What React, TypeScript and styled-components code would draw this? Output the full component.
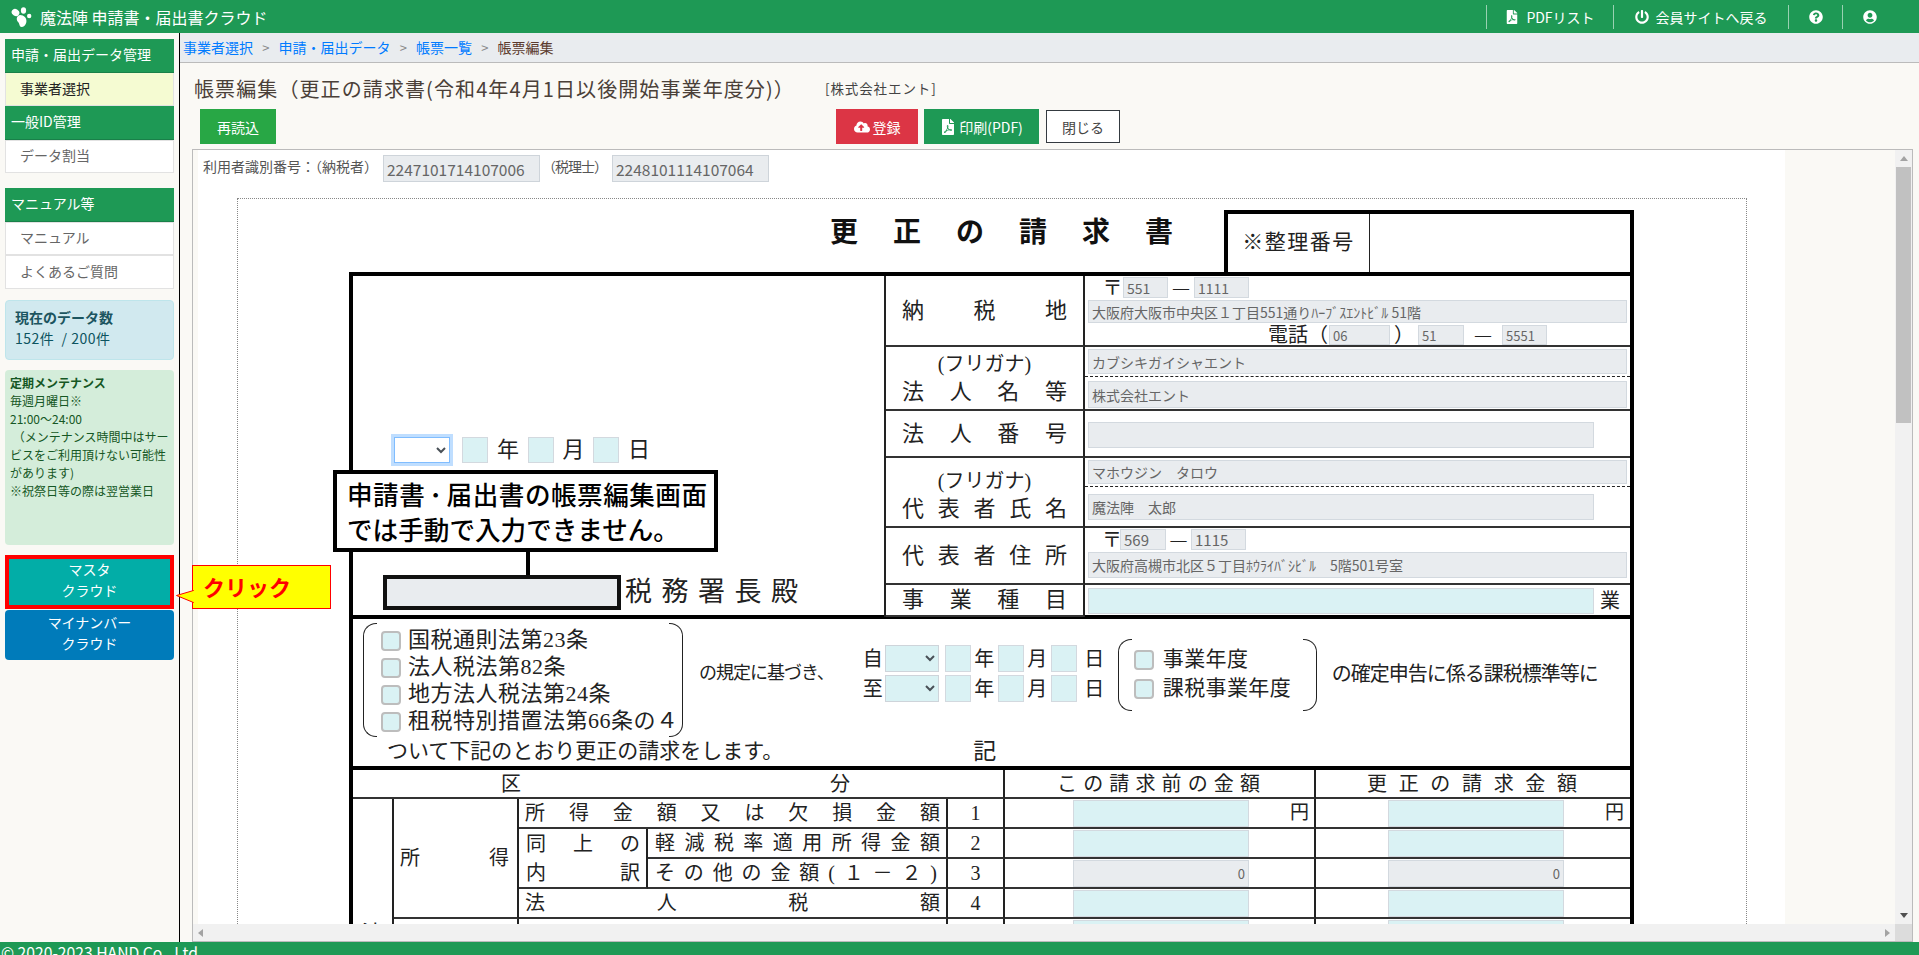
import React from "react";
import styled, { createGlobalStyle } from "styled-components";
import { FaFilePdf, FaPowerOff, FaQuestionCircle, FaUserCircle, FaCloudUploadAlt } from "react-icons/fa";

const UI = `"Noto Sans CJK JP", "Noto Sans", sans-serif`;
const MINCHO = `"Liberation Serif", "Noto Sans CJK JP", serif`;
const GREEN = "#1e9955";

const Global = createGlobalStyle`
  html, body { margin: 0; padding: 0; height: 100%; overflow: hidden; }
  * { box-sizing: border-box; }
  body { font-family: ${UI}; color: #444; background: #faf9f5; }
  #root { height: 100%; }
`;

const Page = styled.div`
  position: relative; height: 100vh; display: flex; flex-direction: column; overflow: hidden;
`;
const Header = styled.header`
  height: 33px; flex: none; background: ${GREEN}; color: #fff; display: flex; align-items: center;
`;
const Brand = styled.div`
  display: flex; align-items: center; gap: 8px; padding-left: 11px; font-size: 16px; white-space: pre;
  svg { width: 21px; height: 20px; }
`;
const Nav = styled.nav`
  margin-left: auto; display: flex; align-items: center;
`;
const NavItem = styled.div<{ $w: number; $plain?: boolean }>`
  width: ${p => p.$w}px; height: 24px; border-left: ${p => (p.$plain ? "none" : "1px solid rgba(255,255,255,.55)")};
  display: flex; align-items: center; justify-content: center; gap: 7px; font-size: 14px; white-space: nowrap;
  svg { width: 14px; height: 14px; flex: none; }
`;
const Body = styled.div`
  flex: 1; min-height: 0; display: flex;
`;
const Sidebar = styled.aside`
  width: 180px; flex: none; border-right: 1px solid #000; padding: 6px 5px 0; background: #faf9f5;
`;
const MenuGroup = styled.div<{ $mt?: number }>`
  margin-top: ${p => p.$mt ?? 0}px;
`;
const MenuHead = styled.div`
  height: 33.5px; background: ${GREEN}; color: #fff; font-size: 14px; display: flex; align-items: center; padding: 0 0 2px 6px;
  border-bottom: 1px solid #198049;
`;
const MenuItem = styled.div<{ $active?: boolean }>`
  height: 33.5px; font-size: 14px; display: flex; align-items: center; padding: 0 0 2px 14px;
  background: ${p => (p.$active ? "#f5fbd2" : "#fff")}; color: ${p => (p.$active ? "#222" : "#666")};
  border: 1px solid #e2e2e2; border-top: ${p => (p.$active ? "none" : "1px solid #e2e2e2")};
`;
const CountBox = styled.div`
  margin-top: 11px; height: 60px; background: #d1e9ef; border: 1px solid #bee5eb; border-radius: 4px; color: #0c5460;
  padding: 6px 9px; font-size: 14px; line-height: 21px; letter-spacing: .5px; white-space: pre;
  b { display: block; font-weight: 700; color: #1c5560; letter-spacing: 0; }
`;
const NoticeBox = styled.div`
  margin-top: 10px; height: 175px; background: #d4edda; border-radius: 4px; color: #155724;
  padding: 4px 5px; font-size: 12px; line-height: 18px; white-space: nowrap;
  b { font-weight: 700; }
`;
const SideButton = styled.div<{ $bg: string; $marked?: boolean; $mt: number; $h: number }>`
  margin-top: ${p => p.$mt}px; height: ${p => p.$h}px; background: ${p => p.$bg}; color: #fff;
  border-radius: ${p => (p.$marked ? 0 : 4)}px; border: ${p => (p.$marked ? "4px solid #f00" : "none")};
  font-size: 14px; line-height: 21px; text-align: center; display: flex; align-items: center; justify-content: center;
  padding-bottom: 3px;
`;
const ClickNote = styled.div`
  position: absolute; left: 192px; top: 565px; width: 139px; height: 44px; background: #ff0; border: 1px solid #f00;
  color: #f00; font-size: 22px; font-weight: 700; padding-left: 10px; line-height: 40px;
  svg { position: absolute; left: -17px; top: 24px; }
`;
const Main = styled.main`
  flex: 1; min-width: 0; display: flex; flex-direction: column;
`;
const Breadcrumb = styled.div`
  height: 30px; flex: none; background: #e9ecef; border-bottom: 1px solid #bbb; display: flex; align-items: center;
  padding: 0 0 1px 3px; font-size: 14px; white-space: nowrap;
`;
const Crumb = styled.span<{ $current?: boolean }>`
  color: ${p => (p.$current ? "#5b3a2c" : "#007bff")};
`;
const CrumbSep = styled.span`
  width: 25.5px; text-align: center; color: #888; font-size: 13px;
`;
const TitleRow = styled.div`
  height: 46px; flex: none; display: flex; align-items: center; padding: 4px 0 0 14px; white-space: nowrap;
`;
const PageTitle = styled.h1`
  margin: 0; font-size: 20px; font-weight: 400; color: #4a4038; letter-spacing: 1.1px;
`;
const Company = styled.span`
  margin-left: 30px; font-size: 13.5px; color: #444; letter-spacing: .9px;
`;
const ToolRow = styled.div`
  height: 35px; flex: none; display: flex; padding-left: 20px;
`;
const Btn = styled.button<{ $bg: string; $w: number; $ml?: number }>`
  width: ${p => p.$w}px; margin-left: ${p => p.$ml ?? 6}px; height: 35px; border: none; background: ${p => p.$bg}; color: #fff;
  font: 14px ${UI}; display: flex; align-items: center; justify-content: center; gap: 3px; padding: 0;
  svg { width: 16px; height: 16px; }
`;
const CloseBtn = styled.button`
  width: 74px; height: 33px; margin: 1px 0 0 7px; background: #fff; border: 1px solid #343a40; color: #444;
  font: 14px ${UI}; padding: 0;
`;
const Frame = styled.div`
  flex: 1; min-height: 0; margin: 5px 6px 0 12px; border: 1px solid #bbb;
  display: grid; grid-template-columns: 1fr 17px; grid-template-rows: 1fr 17px;
`;
const Viewport = styled.div`
  overflow: hidden; padding-left: 5px; background: #faf9f5; min-width: 0; min-height: 0;
`;
const Doc = styled.div`
  width: 1587px; background: #fff; height: 100%;
`;
const IdRow = styled.div`
  height: 48px; display: flex; align-items: flex-start; padding: 5px 0 0 5px; font-size: 14px; color: #555; white-space: nowrap;
`;
const IdLabel = styled.span<{ $ls: number }>`
  line-height: 22px; letter-spacing: ${p => p.$ls}px;
`;
const IdField = styled.input`
  width: 157px; height: 27px; margin: 0 2px 0 5px; background: #e9ecef; border: 1px solid #ced4da; color: #666;
  font: 15.5px ${UI}; padding: 0 3px;
`;
const VTrack = styled.div`
  background: #f1f1f1; display: flex; flex-direction: column; justify-content: space-between; position: relative;
`;
const Thumb = styled.div`
  position: absolute; top: 17px; left: 1px; right: 1px; height: 256px; background: #c1c1c1;
`;
const ArrowCell = styled.div`
  height: 17px; display: flex; align-items: center; justify-content: center;
`;
const Arrow = styled.i<{ $dir: "up" | "down" | "left" | "right"; $color: string }>`
  width: 0; height: 0; border: 4px solid transparent; display: block;
  ${p => p.$dir === "up" && `border-top: none; border-bottom: 5px solid ${p.$color};`}
  ${p => p.$dir === "down" && `border-bottom: none; border-top: 5px solid ${p.$color};`}
  ${p => p.$dir === "left" && `border-left: none; border-right: 5px solid ${p.$color};`}
  ${p => p.$dir === "right" && `border-right: none; border-left: 5px solid ${p.$color};`}
`;
const HTrack = styled.div`
  background: #f1f1f1; display: flex; justify-content: space-between; align-items: center; padding: 0 5px;
`;
const Corner = styled.div`
  background: #dcdcdc;
`;
const Footer = styled.footer`
  height: 13px; flex: none; background: ${GREEN}; color: #fff; font: 15.7px/1 ${UI}; padding: 3px 0 0 1px; overflow: hidden; white-space: nowrap;
`;

/* ---- the paper form ---- */
const Sheet = styled.div`
  margin-left: 39px; width: 1510px; border: 1px dotted #888; border-bottom: none; padding: 11px 0 0 111px;
  font-family: ${MINCHO}; color: #222; font-size: 22px; line-height: 1.2;
`;
const TopBand = styled.div`
  height: 62px; width: 1285px; display: flex; justify-content: space-between;
`;
const FormTitle = styled.div`
  margin: 6px 0 0 481px; font-size: 28px; letter-spacing: 35px; font-weight: 700; white-space: nowrap; line-height: 34px; color: #111;
`;
const RefBox = styled.div`
  width: 410px; height: 62px; border: 4px solid #000; border-bottom: none; display: flex; align-items: center; flex: none;
  > div { width: 142px; height: 100%; border-right: 1px solid #222; font-size: 21px; display: flex; align-items: center; justify-content: center; letter-spacing: 1.5px; white-space: nowrap; }
`;
const Outer = styled.div`
  width: 1285px; border: 4px solid #000; border-bottom: none;
`;
const Sec1 = styled.div`
  height: 343px; display: grid; grid-template-columns: 533px 199px 1fr; grid-template-rows: 71px 64px 47px 70px 57px 1fr;
  border-bottom: 4px solid #000;
`;
const LeftCell = styled.div`
  grid-row: 1 / -1; position: relative; border-right: 2px solid #222; padding-top: 161px;
`;
const DateLine = styled.div`
  display: flex; align-items: center; height: 26px; padding-left: 41px;
`;
const Sel = styled.select<{ $w: number; $h: number; $focus?: boolean; $teal?: boolean }>`
  width: ${p => p.$w}px; height: ${p => p.$h}px; flex: none; font: 14px ${UI}; color: #495057;
  background: ${p => (p.$teal ? "#daf2f4" : "#fff")};
  border: 1px solid ${p => (p.$focus ? "#80bdff" : "#ced4da")};
  box-shadow: ${p => (p.$focus ? "0 0 0 3px rgba(0,123,255,.25)" : "none")};
  border-radius: 0; outline: none; padding: 0;
`;
const Field = styled.input<{ $w?: number; $h?: number; $teal?: boolean; $right?: boolean; $fs?: number; $ml?: number; $mt?: number }>`
  display: block; flex: none; width: ${p => (p.$w ? `${p.$w}px` : "100%")}; height: ${p => p.$h ?? 26}px;
  margin: ${p => p.$mt ?? 0}px 0 0 ${p => p.$ml ?? 0}px;
  background: ${p => (p.$teal ? "#daf2f4" : "#e9ecef")}; border: 1px solid #d3d9df; color: #666;
  font: ${p => p.$fs ?? 13}px ${UI}; padding: 0 3px; text-align: ${p => (p.$right ? "right" : "left")}; border-radius: 0; outline: none;
`;
const Unit = styled.span<{ $w: number; $fs?: number; $left?: boolean }>`
  width: ${p => p.$w}px; flex: none; text-align: ${p => (p.$left ? "left" : "center")}; font-size: ${p => p.$fs ?? 22}px; white-space: nowrap;
`;
const OfficeLine = styled.div`
  display: flex; align-items: center; height: 35px; margin-top: 112px; padding-left: 30px;
`;
const OfficeField = styled.div`
  width: 238px; height: 35px; background: #e9ecef; border: 4px solid #111;
`;
const OfficeText = styled.span`
  margin-left: 4px; font-size: 27px; letter-spacing: 9.5px; white-space: nowrap;
`;
const Callout = styled.div`
  position: absolute; left: -20px; top: 194px; width: 385px; height: 82px; background: #fff; border: 4px solid #000;
  font: 500 25.6px/35px ${UI}; color: #000; padding: 2px 0 0 10px; white-space: nowrap;
  &::after { content: ""; position: absolute; left: 189px; top: 100%; width: 4px; height: 23px; margin-top: 4px; background: #000; }
`;
const CalloutWide = styled.span`
  letter-spacing: .5px;
  b { font-weight: 500; margin: 0 4px; }
`;
const Label = styled.div<{ $double?: boolean }>`
  border-right: 2px solid #222; border-bottom: 2px solid #333; padding: 0 16px; display: flex; flex-direction: column;
  justify-content: ${p => (p.$double ? "flex-end" : "center")}; padding-bottom: ${p => (p.$double ? 2 : 0)}px;
`;
const LabelText = styled.div`
  text-align: justify; text-align-last: justify; font-size: 22px; line-height: 30px; white-space: nowrap;
`;
const Kana = styled.div`
  text-align: center; font-size: 20px; line-height: 26px;
`;
const Value = styled.div<{ $pt?: number; $last?: boolean }>`
  border-bottom: ${p => (p.$last ? "none" : "2px solid #333")}; padding: ${p => p.$pt ?? 0}px 3px 0; min-width: 0;
  display: flex; flex-direction: column;
`;
const InlineRow = styled.div<{ $ml?: number; $mt?: number; $h: number }>`
  display: flex; align-items: center; height: ${p => p.$h}px; margin-left: ${p => p.$ml ?? 0}px; margin-top: ${p => p.$mt ?? 0}px;
`;
const DashRule = styled.div<{ $mt: number }>`
  margin: ${p => p.$mt}px -3px 0; border-top: 1px dashed #222; height: 0;
`;
const Sec2 = styled.div`
  height: 147px;
`;
const Sec2Top = styled.div`
  height: 118px; display: flex; padding: 4px 0 0 10px;
`;
const Bracket = styled.div<{ $w: number; $h: number; $mt?: number; $ml?: number; $pt: number; $pl: number }>`
  position: relative; flex: none; width: ${p => p.$w}px; height: ${p => p.$h}px; margin-top: ${p => p.$mt ?? 0}px; margin-left: ${p => p.$ml ?? 0}px;
  padding: ${p => p.$pt}px 0 0 ${p => p.$pl}px;
  &::before, &::after {
    content: ""; position: absolute; top: 0; bottom: 0; width: 13px; border: 1.5px solid #222;
  }
  &::before { left: 0; border-right: none; border-radius: 13px 0 0 13px; }
  &::after { right: 0; border-left: none; border-radius: 0 13px 13px 0; }
`;
const CheckRow = styled.label<{ $h: number; $fs: number; $gap: number; $ls?: number }>`
  display: flex; align-items: center; height: ${p => p.$h}px; font-size: ${p => p.$fs}px; gap: ${p => p.$gap}px; white-space: nowrap;
  letter-spacing: ${p => p.$ls ?? 0}px;
`;
const Check = styled.input.attrs({ type: "checkbox" })`
  appearance: none; margin: 0; width: 20px; height: 20px; flex: none; background: #daf2f4; border: 2px solid #bdbdbd; border-radius: 4px;
`;
const Squeezed = styled.div<{ $ml: number; $mt: number; $fs: number; $ls: number }>`
  margin: ${p => p.$mt}px 0 0 ${p => p.$ml}px; font-size: ${p => p.$fs}px; letter-spacing: ${p => p.$ls}px; white-space: nowrap; flex: none; line-height: 24px;
`;
const PeriodBlock = styled.div`
  margin: 22px 0 0 27px; flex: none; display: flex; flex-direction: column; gap: 3px;
`;
const PeriodRow = styled.div`
  display: flex; align-items: center; height: 27px;
`;
const Sec2Bottom = styled.div`
  height: 29px; display: flex; align-items: center; padding-left: 34px; font-size: 21px; white-space: nowrap;
  i { font-style: normal; margin-left: 190px; font-size: 23px; }
`;
const Grid = styled.div`
  border-top: 4px solid #000; display: grid; grid-template-columns: 41px 125px 129px 300px 57px 311px 1fr;
  grid-template-rows: 29px repeat(5, 30px);
`;
const Cell = styled.div<{ $c: string; $r: string; $pl?: number; $pr?: number; $nr?: boolean; $center?: boolean }>`
  grid-column: ${p => p.$c}; grid-row: ${p => p.$r};
  border-right: ${p => (p.$nr ? "none" : "2px solid #222")}; border-bottom: 2px solid #333;
  padding: 0 ${p => p.$pr ?? 0}px 0 ${p => p.$pl ?? 0}px; font-size: 20px; min-width: 0; white-space: nowrap;
  display: flex; flex-direction: column; justify-content: center; text-align: ${p => (p.$center ? "center" : "justify")};
  text-align-last: ${p => (p.$center ? "center" : "justify")}; line-height: 28px;
`;
const StackCell = styled(Cell)`
  justify-content: space-around;
`;
const TallCell = styled(Cell)`
  justify-content: flex-start; padding-top: 121px; overflow: hidden; font-size: 22px;
`;
const AmountCell = styled.div<{ $c: number; $r: number; $pl: number; $nr?: boolean }>`
  grid-column: ${p => p.$c}; grid-row: ${p => p.$r}; border-right: ${p => (p.$nr ? "none" : "2px solid #222")}; border-bottom: 2px solid #333;
  display: flex; align-items: center; padding-left: ${p => p.$pl}px; font-size: 19px;
  span { margin-left: 41px; }
`;

const rows = [2, 3, 4, 5, 6];

const Paw = () => (
  <svg viewBox="0 0 21 20" fill="#fff" aria-hidden="true">
    <ellipse cx="4.5" cy="5.5" rx="4" ry="3.4" transform="rotate(35 4.5 5.5)" />
    <ellipse cx="12.5" cy="3.5" rx="2.6" ry="3.2" />
    <circle cx="18.2" cy="9" r="2.2" />
    <path d="M9 8C13 8 16 11 15.4 15C15 18 12.5 20 10.5 20C8.5 20 8.5 17 7.5 15.5C5 13 5 9 9 8Z" />
  </svg>
);

export default function App() {
  return (
    <Page>
      <Global />
      <Header>
        <Brand><Paw />魔法陣 申請書・届出書クラウド</Brand>
        <Nav>
          <NavItem $w={127}><FaFilePdf />PDFリスト</NavItem>
          <NavItem $w={175}><FaPowerOff />会員サイトへ戻る</NavItem>
          <NavItem $w={54}><FaQuestionCircle /></NavItem>
          <NavItem $w={54}><FaUserCircle /></NavItem>
          <NavItem $w={23} $plain />
        </Nav>
      </Header>
      <Body>
        <Sidebar>
          <MenuGroup>
            <MenuHead>申請・届出データ管理</MenuHead>
            <MenuItem $active>事業者選択</MenuItem>
            <MenuHead>一般ID管理</MenuHead>
            <MenuItem>データ割当</MenuItem>
          </MenuGroup>
          <MenuGroup $mt={15}>
            <MenuHead>マニュアル等</MenuHead>
            <MenuItem>マニュアル</MenuItem>
            <MenuItem>よくあるご質問</MenuItem>
          </MenuGroup>
          <CountBox><b>現在のデータ数</b>{"152件  / 200件"}</CountBox>
          <NoticeBox>
            <b>定期メンテナンス</b><br />
            毎週月曜日※<br />
            21:00～24:00<br />
            &nbsp;（メンテナンス時間中はサー<br />
            ビスをご利用頂けない可能性<br />
            があります)<br />
            ※祝祭日等の際は翌営業日
          </NoticeBox>
          <SideButton $bg="#02ada7" $marked $mt={10} $h={54}>マスタ<br />クラウド</SideButton>
          <SideButton $bg="#007bba" $mt={1} $h={50}>マイナンバー<br />クラウド</SideButton>
        </Sidebar>
        <Main>
          <Breadcrumb>
            <Crumb>事業者選択</Crumb><CrumbSep>&gt;</CrumbSep>
            <Crumb>申請・届出データ</Crumb><CrumbSep>&gt;</CrumbSep>
            <Crumb>帳票一覧</Crumb><CrumbSep>&gt;</CrumbSep>
            <Crumb $current>帳票編集</Crumb>
          </Breadcrumb>
          <TitleRow>
            <PageTitle>帳票編集（更正の請求書(令和4年4月1日以後開始事業年度分)）</PageTitle>
            <Company>[株式会社エント]</Company>
          </TitleRow>
          <ToolRow>
            <Btn $bg="#28a745" $w={76} $ml={0}>再読込</Btn>
            <Btn $bg="#dc3545" $w={82} $ml={560}><FaCloudUploadAlt />登録</Btn>
            <Btn $bg={GREEN} $w={115}><FaFilePdf />印刷(PDF)</Btn>
            <CloseBtn>閉じる</CloseBtn>
          </ToolRow>
          <Frame>
            <Viewport>
              <Doc>
                <IdRow>
                  <IdLabel $ls={0}>利用者識別番号：（納税者）</IdLabel>
                  <IdField readOnly value="2247101714107006" />
                  <IdLabel $ls={-1}>（税理士）</IdLabel>
                  <IdField readOnly value="2248101114107064" />
                </IdRow>
                <Sheet>
                  <TopBand>
                    <FormTitle>更正の請求書</FormTitle>
                    <RefBox><div>※整理番号</div></RefBox>
                  </TopBand>
                  <Outer>
                    <Sec1>
                      <LeftCell>
                        <DateLine>
                          <Sel $w={56} $h={26} $focus />
                          <Field $teal $w={26} $ml={12} />
                          <Unit $w={40}>年</Unit>
                          <Field $teal $w={26} />
                          <Unit $w={39}>月</Unit>
                          <Field $teal $w={26} />
                          <Unit $w={40}>日</Unit>
                        </DateLine>
                        <OfficeLine>
                          <OfficeField />
                          <OfficeText>税務署長殿</OfficeText>
                        </OfficeLine>
                        <Callout><CalloutWide>申請書<b>･</b>届出書の帳票編集画面</CalloutWide><br />では手動で入力できません。</Callout>
                      </LeftCell>

                      <Label><LabelText>納税地</LabelText></Label>
                      <Value $pt={1}>
                        <InlineRow $h={21} $ml={14}>
                          <Unit $w={21} $fs={20}>〒</Unit>
                          <Field $w={45} $h={21} $fs={14} readOnly value="551" />
                          <Unit $w={26} $fs={16}>―</Unit>
                          <Field $w={55} $h={21} $fs={14} readOnly value="1111" />
                        </InlineRow>
                        <Field $h={23} $fs={14} $mt={2} readOnly value="大阪府大阪市中央区１丁目551通りﾊｰﾌﾞｽｴﾝﾄﾋﾞﾙ 51階" />
                        <InlineRow $h={20} $mt={2} $ml={180}>
                          <Unit $w={61} $fs={20} $left>電話（</Unit>
                          <Field $w={61} $h={20} $fs={13} readOnly value="06" />
                          <Unit $w={28} $fs={20}>）</Unit>
                          <Field $w={46} $h={20} $fs={13} readOnly value="51" />
                          <Unit $w={38} $fs={16}>―</Unit>
                          <Field $w={45} $h={20} $fs={13} readOnly value="5551" />
                        </InlineRow>
                      </Value>

                      <Label $double><Kana>(フリガナ)</Kana><LabelText>法人名等</LabelText></Label>
                      <Value $pt={2}>
                        <Field $h={25} $fs={14} readOnly value="カブシキガイシャエント" />
                        <DashRule $mt={2} />
                        <Field $h={27} $fs={14} $mt={4} readOnly value="株式会社エント" />
                      </Value>

                      <Label><LabelText>法人番号</LabelText></Label>
                      <Value $pt={11}><Field $w={506} $h={26} readOnly /></Value>

                      <Label $double><Kana>(フリガナ)</Kana><LabelText>代表者氏名</LabelText></Label>
                      <Value $pt={2}>
                        <Field $h={24} $fs={14} readOnly value="マホウジン　タロウ" />
                        <DashRule $mt={2} />
                        <Field $w={506} $h={26} $fs={14} $mt={7} readOnly value="魔法陣　太郎" />
                      </Value>

                      <Label><LabelText>代表者住所</LabelText></Label>
                      <Value $pt={1}>
                        <InlineRow $h={21} $ml={14}>
                          <Unit $w={18} $fs={20}>〒</Unit>
                          <Field $w={46} $h={21} $fs={15} readOnly value="569" />
                          <Unit $w={25} $fs={16}>―</Unit>
                          <Field $w={55} $h={21} $fs={15} readOnly value="1115" />
                        </InlineRow>
                        <Field $h={26} $fs={14} $mt={2} readOnly value="大阪府高槻市北区５丁目ﾎｳﾗｲﾊﾞｼﾋﾞﾙ　5階501号室" />
                      </Value>

                      <Label><LabelText>事業種目</LabelText></Label>
                      <Value $pt={3} $last>
                        <InlineRow $h={26}>
                          <Field $teal $w={506} $h={26} readOnly />
                          <Unit $w={32} $fs={20}>業</Unit>
                        </InlineRow>
                      </Value>
                    </Sec1>

                    <Sec2>
                      <Sec2Top>
                        <Bracket $w={320} $h={114} $pt={4} $pl={18}>
                          <CheckRow $h={27} $fs={22} $gap={7} $ls={.5}><Check />国税通則法第23条</CheckRow>
                          <CheckRow $h={27} $fs={22} $gap={7} $ls={.5}><Check />法人税法第82条</CheckRow>
                          <CheckRow $h={27} $fs={22} $gap={7} $ls={.5}><Check />地方法人税法第24条</CheckRow>
                          <CheckRow $h={27} $fs={22} $gap={7} $ls={.5}><Check />租税特別措置法第66条の４</CheckRow>
                        </Bracket>
                        <Squeezed $ml={16} $mt={38} $fs={18} $ls={-1}>の規定に基づき、</Squeezed>
                        <PeriodBlock>
                          <PeriodRow>
                            <Unit $w={24} $fs={20}>自</Unit>
                            <Sel $teal $w={54} $h={27} />
                            <Field $teal $w={26} $h={27} $ml={6} /><Unit $w={27} $fs={20}>年</Unit>
                            <Field $teal $w={26} $h={27} /><Unit $w={27} $fs={20}>月</Unit>
                            <Field $teal $w={26} $h={27} /><Unit $w={35} $fs={20}>日</Unit>
                          </PeriodRow>
                          <PeriodRow>
                            <Unit $w={24} $fs={20}>至</Unit>
                            <Sel $teal $w={54} $h={27} />
                            <Field $teal $w={26} $h={27} $ml={6} /><Unit $w={27} $fs={20}>年</Unit>
                            <Field $teal $w={26} $h={27} /><Unit $w={27} $fs={20}>月</Unit>
                            <Field $teal $w={26} $h={27} /><Unit $w={35} $fs={20}>日</Unit>
                          </PeriodRow>
                        </PeriodBlock>
                        <Bracket $w={199} $h={72} $mt={16} $ml={6} $pt={6} $pl={16}>
                          <CheckRow $h={29} $fs={21} $gap={9} $ls={.4}><Check />事業年度</CheckRow>
                          <CheckRow $h={29} $fs={21} $gap={9} $ls={.4}><Check />課税事業年度</CheckRow>
                        </Bracket>
                        <Squeezed $ml={15} $mt={39} $fs={20} $ls={-1}>の確定申告に係る課税標準等に</Squeezed>
                      </Sec2Top>
                      <Sec2Bottom>ついて下記のとおり更正の請求をします。<i>記</i></Sec2Bottom>
                    </Sec2>

                    <Grid>
                      <Cell $c="1 / 6" $r="1" $pl={148} $pr={153}>区分</Cell>
                      <Cell $c="6" $r="1" $pl={52} $pr={54}>この請求前の金額</Cell>
                      <Cell $c="7" $r="1" $pl={51} $pr={53} $nr>更正の請求金額</Cell>

                      <TallCell $c="1" $r="2 / 8" $center>法</TallCell>
                      <Cell $c="2" $r="2 / 6" $pl={6} $pr={8}>所得</Cell>
                      <Cell $c="2" $r="6 / 8" />

                      <Cell $c="3 / 5" $r="2" $pl={6} $pr={6}>所得金額又は欠損金額</Cell>
                      <StackCell $c="3" $r="3 / 5" $pl={7} $pr={6}>
                        <div>同上の</div><div>内訳</div>
                      </StackCell>
                      <Cell $c="4" $r="3" $pl={7} $pr={6}>軽減税率適用所得金額</Cell>
                      <Cell $c="4" $r="4" $pl={7} $pr={9}>その他の金額(１－２)</Cell>
                      <Cell $c="3 / 5" $r="5" $pl={6} $pr={6}>法人税額</Cell>
                      <Cell $c="3 / 5" $r="6" />

                      {["1", "2", "3", "4", ""].map((n, i) => (
                        <Cell key={i} $c="5" $r={String(i + 2)} $center>{n}</Cell>
                      ))}
                      {rows.map((r, i) => (
                        <React.Fragment key={r}>
                          <AmountCell $c={6} $r={r} $pl={68}>
                            {i === 2 ? <Field $w={176} $h={27} $right readOnly value="0" /> : <Field $teal $w={176} $h={27} readOnly />}
                            {i === 0 && <span>円</span>}
                          </AmountCell>
                          <AmountCell $c={7} $r={r} $pl={72} $nr>
                            {i === 2 ? <Field $w={176} $h={27} $right readOnly value="0" /> : <Field $teal $w={176} $h={27} readOnly />}
                            {i === 0 && <span>円</span>}
                          </AmountCell>
                        </React.Fragment>
                      ))}
                    </Grid>
                  </Outer>
                </Sheet>
              </Doc>
            </Viewport>
            <VTrack>
              <ArrowCell><Arrow $dir="up" $color="#a3a3a3" /></ArrowCell>
              <Thumb />
              <ArrowCell><Arrow $dir="down" $color="#505050" /></ArrowCell>
            </VTrack>
            <HTrack>
              <Arrow $dir="left" $color="#a3a3a3" />
              <Arrow $dir="right" $color="#a3a3a3" />
            </HTrack>
            <Corner />
          </Frame>
        </Main>
      </Body>
      <Footer>© 2020-2023 HAND Co., Ltd.</Footer>
      <ClickNote>
        <svg width="18" height="14" viewBox="0 0 18 14"><polygon points="17.5,0.5 0.5,5.5 17.5,12.5" fill="#ff0" stroke="#f00" /><rect x="16.8" y="1" width="2" height="11" fill="#ff0" /></svg>
        クリック
      </ClickNote>
    </Page>
  );
}
